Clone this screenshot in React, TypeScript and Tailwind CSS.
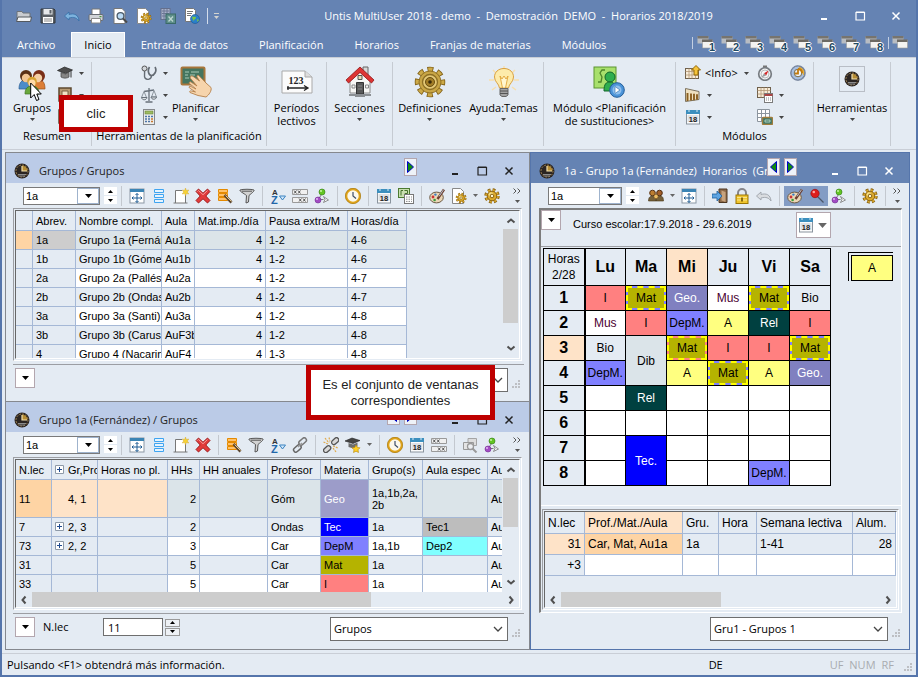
import React, { useState } from 'react';
import clsx from 'clsx';

/* ---------- Icons ---------- */

const gear = (fill: string, stroke: string) => (
  <>
    <circle cx="8" cy="8" r="6" fill="none" stroke={stroke} strokeWidth="3.4" strokeDasharray="2.6 2.1" />
    <circle cx="8" cy="8" r="5.6" fill="none" stroke={fill} strokeWidth="2.4" strokeDasharray="2 2.4" />
    <circle cx="8" cy="8" r="4.8" fill={fill} stroke={stroke} />
    <circle cx="7" cy="6.6" r="2.4" fill="#f5dd84" />
    <circle cx="8" cy="8" r="1.8" fill="#fff6cf" stroke={stroke} />
  </>
);

const palette = (
  <>
    <ellipse cx="7.5" cy="9.5" rx="6.8" ry="5.4" fill="#ead6b6" stroke="#6b5a45" />
    <circle cx="4" cy="9" r="1.4" fill="#c33" />
    <circle cx="6.4" cy="6.6" r="1.2" fill="#3b7fc4" />
    <circle cx="5.6" cy="12" r="1.3" fill="#3a9a3a" />
    <path d="M15 1.5 8.5 11" stroke="#6e3d2b" strokeWidth="2.4" />
    <path d="M14.6 1.6 10 8.4" stroke="#b4c4d6" strokeWidth="1" />
  </>
);

const calendar = (
  <>
    <rect x="1.5" y="1.5" width="13" height="13.5" fill="#fbfbfb" stroke="#8a949e" />
    <rect x="1" y="1" width="14" height="4" fill="#3c8fbe" />
    <path d="M4 0v3M12 0v3" stroke="#d7eaf5" />
    <rect x="2.5" y="6" width="11" height="7" fill="#dde1e5" />
    <text x="8" y="12.6" textAnchor="middle" fontSize="7.5" fontWeight="bold" fontFamily="Liberation Sans, sans-serif" fill="#222">18</text>
  </>
);

const molecule = (
  <>
    <path d="m4.500 11 4-6M4.500 11.500h5" stroke="#777" fill="none" />
    <circle cx="8" cy="4" r="3" fill="#62c522" stroke="#2f7a10" strokeWidth=".6" />
    <circle cx="7" cy="3" r="1" fill="#c9f2a5" />
    <circle cx="4" cy="12" r="3" fill="#a24cc4" stroke="#6f2a8f" strokeWidth=".6" />
    <circle cx="3" cy="11" r="1" fill="#e2baf2" />
    <path d="m9.500 8.500 5 3.500-5 2.500 1.500-3z" fill="#f4f4f4" stroke="#777" strokeWidth=".8" />
  </>
);

const table = (
  <>
    <rect x=".5" y="3.500" width="13" height="10" fill="#f7ecd9" stroke="#6f604c" />
    <path d="M.5 6.500h13M.5 10h13M4 3.500v10M7 3.500v10M10.500 3.500v10" stroke="#b39775" strokeWidth=".8" />
  </>
);

const ICONS: Record<string, React.ReactNode> = {
  open: (
    <>
      <path d="M1 3.500h5l1 1.500h7v7H1z" fill="#c9ccd0" stroke="#6d7278" />
      <path d="M2 9h13.500l-1 4.500H.5z" fill="#f1f2f3" stroke="#53585e" />
    </>
  ),
  save: (
    <>
      <path d="M1 1h13l1 1v13H1z" fill="#5b6066" stroke="#33373b" />
      <rect x="3.500" y="1" width="9" height="5.500" fill="#e6e8ea" />
      <rect x="9.500" y="2" width="2" height="3.500" fill="#5b6066" />
      <rect x="3" y="9" width="10" height="6" fill="#fff" />
      <path d="M4 11h8M4 13h8" stroke="#888" />
    </>
  ),
  undo: <path d="M.5 8 5 4v2.500c5-1.500 9.500 0 10 6.500-2-3-5-4.500-10-3V12z" fill="#7db2dd" stroke="#2f6aa3" strokeWidth=".7" />,
  undoGray: <path d="M.5 8 5 4v2.500c5-1.500 9.500 0 10 6.500-2-3-5-4.500-10-3V12z" fill="#d9dce0" stroke="#9da3aa" strokeWidth=".9" />,
  print: (
    <>
      <path d="M4 1h8v6H4z" fill="#fff" stroke="#777" />
      <rect x="1" y="6.500" width="14" height="6" rx="1" fill="#d0d3d7" stroke="#666b72" />
      <path d="M3.500 10.500h9v4.500h-9z" fill="#fff" stroke="#888" />
      <rect x="11.500" y="8" width="2" height="1.200" fill="#4a9a3a" />
    </>
  ),
  preview: (
    <>
      <path d="M2 .5h8l3 3v12H2z" fill="#fff" stroke="#777" />
      <circle cx="8.500" cy="8" r="3.400" fill="#bcdcf5" stroke="#4b5a68" strokeWidth="1.300" />
      <path d="m11 10.500 4 4" stroke="#4b4b4b" strokeWidth="2" />
    </>
  ),
  pageGear: (
    <>
      <path d="M1.500.5h8l3 3v12h-11z" fill="#fff" stroke="#888" />
      <g transform="translate(4.500 4.500) scale(.7)">{gear('#e2ad2a', '#8c6410')}</g>
    </>
  ),
  excel: (
    <>
      <rect x="1" y=".5" width="9" height="11" fill="#a9b3cb" stroke="#646f8c" />
      <path d="M2 3h7M2 5.500h7M2 8h7M4 1v10M7 1v10" stroke="#6c7794" />
      <rect x="6" y="6" width="9.500" height="9.500" fill="#5e8f8a" stroke="#3a6a67" />
      <path d="m8.500 8.500 4.500 5M13 8.500l-4.500 5" stroke="#bcd6d0" strokeWidth="1.300" />
    </>
  ),
  pageGlobe: (
    <>
      <path d="M1.500.5h8l2 2v11h-10z" fill="#fff" stroke="#777" />
      <path d="M3 3.500h6M3 5.500h5M3 7.500h4" stroke="#777" />
      <circle cx="11" cy="11" r="4.500" fill="#2a7fca" stroke="#1b5590" strokeWidth=".6" />
      <path d="M8 8.500c2 .5 4-.5 4 1s-2 1.500-2 3-2-2.500-2-4zM13 11l2 1-1.500 2z" fill="#7bc745" />
    </>
  ),
  windows: (
    <>
      <path d="M.5 1.500h11v7H.5z" fill="#b8bcc2" />
      <path d="M.5 1h11v2.500H.5z" fill="#77746e" />
      <path d="M5.500 5h10v8h-10z" fill="#f3f3f1" stroke="#9c9b97" strokeWidth=".6" />
      <path d="M5 4.500h10.500V7H5z" fill="#6c6963" />
    </>
  ),
  fit: (
    <>
      <rect x="1" y="1" width="14" height="14" fill="#fff" stroke="#8b98a5" />
      <path d="M1 2.500h14" stroke="#3b84b4" strokeWidth="3" />
      <path d="M8 5.500v9M3 10h10M6.500 7 8 5.500 9.500 7M6.500 13 8 14.500 9.500 13M4.500 8.500 3 10l1.500 1.500M11.500 8.500 13 10l-1.500 1.500" stroke="#1e5c94" fill="none" />
    </>
  ),
  rows: <path d="M3.500 1.500h9v3h-9zM3.500 6.500h9v3h-9zM3.500 11.500h9v3h-9z" fill="#e6f4ff" stroke="#3fa4f0" />,
  newPage: (
    <>
      <path d="M2.500 2.500h7l3 3v9.500h-10z" fill="#fff" />
      <path d="M2.500 15V2.500H9M12.500 7v8M.5 15h14" stroke="#777" fill="none" />
      <path d="m12.500 0 .8 2.400L15.800 2l-1.500 2 1.500 2-2.500-.4-.8 2.400-.8-2.400-2.500.4 1.500-2-1.500-2 2.500.4z" fill="#f7d233" stroke="#d0a020" strokeWidth=".4" />
    </>
  ),
  remove: (
    <>
      <path d="m1 3.500 2.500-2.500L8 5.200 12.500 1 15 3.500 10.800 8l4.200 4.500-2.500 2.500L8 10.800 3.500 15 1 12.500 5.200 8z" fill="#e23b3b" stroke="#971212" strokeWidth=".9" />
      <path d="m2.500 3.500 1-1L8 6.700l4.500-4.200" stroke="#f79a9a" fill="none" />
    </>
  ),
  edit: (
    <>
      <path d="M1.500 1.500h9v3h-9zM1.500 5.500h9v3h-9zM1.500 9.500h9v3h-9z" fill="#ffc168" stroke="#e58a00" />
      <path d="m7.500 7 7 7.500" stroke="#5b4630" strokeWidth="2.600" />
      <path d="m8.500 7.500 6 6" stroke="#e8c98a" strokeWidth="1" />
    </>
  ),
  filter: <path d="M1 2c3-1 11-1 14 0 .6 1-1.500 2.500-5 5.500L9.500 14 7 15l.5-7.500C4.500 5 .5 3.500 1 2zM3 3.200h10" fill="#d2d2d2" stroke="#555" />,
  sort: (
    <>
      <text x="2" y="7" fontSize="8" fontWeight="bold" fontFamily="Liberation Sans, sans-serif" fill="#333">A</text>
      <text x="1" y="15.500" fontSize="11" fontWeight="bold" fontFamily="Liberation Sans, sans-serif" fill="#2166a8">Z</text>
      <path d="M9.500 8h6l-3 4z" fill="#cfe6fa" stroke="#3b82c0" />
    </>
  ),
  fields: (
    <>
      <path d="M.5 1.500h15v5H.5zM.5 9.500h15v5H.5z" fill="#f0f0f0" stroke="#9a9a9a" />
      <path d="m2 2.500 2.500 3m0-3-2.500 3m4-3 2.500 3m0-3-2.500 3M7 10.500l2.500 3m0-3-2.500 3m4-3 2.500 3m0-3-2.500 3" stroke="#333" strokeWidth=".8" />
    </>
  ),
  molecule,
  clock: (
    <>
      <circle cx="8" cy="8" r="6.800" fill="#fbf8ec" stroke="#e0a51c" strokeWidth="2.200" />
      <circle cx="8" cy="8" r="7.700" fill="none" stroke="#8f6508" strokeWidth=".5" />
      <path d="M8 4v4l3 2.500" stroke="#3c4d69" strokeWidth="1.200" fill="none" />
    </>
  ),
  calendar,
  copyTable: (
    <>
      <rect x=".5" y=".5" width="11" height="9" fill="#c9dfb0" stroke="#4c7a31" />
      <path d="M5 2.500H3v5M6.500 2.500h3v3H7v2" stroke="#43702a" fill="none" />
      <rect x="6.500" y="6.500" width="9" height="9" fill="#fff" stroke="#777" />
      <path d="M8 9h6M8 11.200h6M8 13.400h6" stroke="#888" strokeDasharray="1.500 1" />
    </>
  ),
  palette,
  gear: gear('#dba92c', '#8a6312'),
  chain: (
    <>
      <rect x="6.500" y="2" width="8.500" height="4.500" rx="2.200" transform="rotate(-42 11 4.500)" fill="none" stroke="#777" strokeWidth="1.500" />
      <rect x="1" y="9.500" width="8.500" height="4.500" rx="2.200" transform="rotate(-42 5 11.500)" fill="none" stroke="#666" strokeWidth="1.500" />
      <path d="m6 10 4-4" stroke="#999" strokeWidth="1.500" />
    </>
  ),
  unlink: (
    <>
      <rect x="8" y="2" width="8" height="4.500" rx="2.200" transform="rotate(-42 12 4)" fill="#d9d9d9" stroke="#555" strokeWidth="1.300" />
      <rect x="0" y="10" width="8" height="4.500" rx="2.200" transform="rotate(-42 4 12)" fill="#d9d9d9" stroke="#555" strokeWidth="1.300" />
      <path d="m2 1 4 5M6 .5l1 4M.5 5 5 7M10 9l5 2M10 11l3 4" stroke="#e0a94a" strokeWidth="1.200" strokeDasharray="2 1" />
    </>
  ),
  capStar: (
    <>
      <path d="m0 4 7-3 8 2.500-7 3z" fill="#444" stroke="#222" strokeWidth=".6" />
      <path d="M3.500 6v4l5 1.500 4-2V5.500L8 7.500z" fill="#6c6c6c" />
      <path d="m11 8 1.300 2.500 2.700.3-2 2 .5 2.700-2.500-1.300L8.500 15.500l.5-2.700-2-2 2.700-.3z" fill="#ffcf24" stroke="#b78608" strokeWidth=".6" />
    </>
  ),
  cap: (
    <>
      <path d="m.5 5.500 7-3.500 8 3-7 3.500z" fill="#4d4d4d" stroke="#222" strokeWidth=".7" />
      <path d="M4 7.500v4.500c2 1.500 6 1.500 8 0V7l-3.500 2z" fill="#858585" stroke="#444" strokeWidth=".7" />
      <path d="M14 5.500v7" stroke="#333" />
    </>
  ),
  tablesGray: (
    <>
      <path d="M6 1.500h8.500v7H6z" fill="#ddd" stroke="#a5a5a5" />
      <path d="M1.500 5.500h10v7h-10z" fill="#e4e4e4" stroke="#999" />
      <circle cx="8.500" cy="9.500" r="3" fill="#eceef1" stroke="#999" strokeWidth="1.300" />
      <path d="m10.500 11.500 4 4" stroke="#999" strokeWidth="2" />
    </>
  ),
  people: (
    <>
      <circle cx="4.500" cy="5" r="2.800" fill="#bb7d31" stroke="#5b3413" />
      <circle cx="11.500" cy="5" r="2.800" fill="#a35f2a" stroke="#4f2c10" />
      <path d="M.5 13c0-4 2-5 4-5s3.500 1 3.500 5zM8 13c0-4 2-5 4-5s3.500 1 3.500 5z" fill="#75603a" stroke="#463619" strokeWidth=".6" />
      <circle cx="8" cy="8.500" r="2.200" fill="#edbd63" stroke="#6b4310" strokeWidth=".6" />
    </>
  ),
  exit: (
    <>
      <path d="M7 1h8v13.500H7z" fill="#8c6a4a" stroke="#4d3722" />
      <path d="m9.500 2.500 4 1.500v10l-4-1.500z" fill="#c7a37e" />
      <path d="M0 6h5V3l5 5-5 5v-3H0z" fill="#5da4e2" stroke="#1f5f9c" strokeWidth=".8" />
    </>
  ),
  lock: (
    <>
      <path d="M4 8V5a4 4 0 0 1 8 0v3" fill="none" stroke="#85858a" strokeWidth="2" />
      <rect x="2" y="7" width="12" height="8.500" fill="#f0c52d" stroke="#9b7605" />
      <path d="M3 9.500h10M3 12h10" stroke="#fae58b" />
      <rect x="7.200" y="9.500" width="1.600" height="4" fill="#6e5200" />
    </>
  ),
  pin: (
    <>
      <path d="m8 8 6.500 6.500" stroke="#4b5568" strokeWidth="1.300" />
      <circle cx="6" cy="5.500" r="4.200" fill="#dd1d1d" stroke="#8b0b0b" strokeWidth=".6" />
      <circle cx="4.800" cy="4" r="1.300" fill="#ffa4a4" />
    </>
  ),
  steth: (
    <>
      <path d="M8.500 2C6 6 8 10.500 10.500 10.500S16.500 6 14 2" fill="none" stroke="#646b73" strokeWidth="1.700" />
      <path d="M10.500 10.500c0 4-4.500 5-6.500 2.500C2.800 11 4 9 3.500 6" fill="none" stroke="#646b73" strokeWidth="1.400" />
      <circle cx="3.500" cy="3.500" r="2.500" fill="#d2d6da" stroke="#555" />
    </>
  ),
  scales: (
    <>
      <path d="M8 1v13M3 4.500 13 3M4.500 15h7" stroke="#67707a" strokeWidth="1.300" />
      <path d="m3 4.500-2.500 6h5zM13 3.500l-2.500 6.500h5z" fill="none" stroke="#8d969e" />
      <path d="M.5 10.500h5.500c-.5 3-5 3-5.500 0zM10 10h5.500c-.5 3-5 3-5.500 0z" fill="#dce1e4" stroke="#67707a" />
    </>
  ),
  calculator: (
    <>
      <rect x="2.500" y=".5" width="11" height="15" fill="#eceeee" stroke="#85888c" />
      <rect x="4" y="2" width="8" height="3" fill="#9dbb62" stroke="#6a853a" strokeWidth=".6" />
      <path d="M4 7.500h2M7 7.500h2M4 10h2M7 10h2M4 12.500h2M7 12.500h2M10 7.500h2" stroke="#4d74a8" strokeWidth="1.500" />
      <path d="M10 10h2M10 12.500h2" stroke="#c9782f" strokeWidth="1.500" />
    </>
  ),
  book: (
    <>
      <path d="M2 1h12v13H2z" fill="#b79a73" stroke="#5d4a30" strokeWidth="1.500" />
      <path d="M5 4h6v5H5z" fill="#f2e2c4" stroke="#7b6342" />
    </>
  ),
  room: (
    <>
      <path d="m.5 1.500 13.500 3v8L.5 14.500z" fill="#efe0bf" stroke="#7d735f" />
      <path d="M2.500 6v8M6 6.500v7M9 6.800v6.500M12 7.200v5.500" stroke="#8a5f20" strokeWidth="1.900" />
    </>
  ),
  tableUp: (
    <>
      {table}
      <path d="m11 .5 4.500 4.500H13v5H9V5H6.500z" fill="#f5c33a" stroke="#916606" />
    </>
  ),
  tableCal: (
    <>
      <g transform="translate(0 -3)">{table}</g>
      <rect x="7.500" y="6.500" width="8" height="9" fill="#fff" stroke="#7b7b7b" />
      <path d="M7.500 8h8" stroke="#a44" strokeWidth="2" />
      <path d="M9 11h5M9 13h5" stroke="#888" strokeDasharray="1 1" />
    </>
  ),
  tableBoard: (
    <>
      <path d="M.5.5h12v12H.5zM.5 4.500h12M.5 8.500h12M4.500.5v12M8.500.5v12" fill="#fff" stroke="#8c959e" />
      <rect x="5.500" y="8.500" width="10" height="7" rx="1" fill="#3e7867" stroke="#a07d3c" strokeWidth="1.400" />
      <path d="M8 11h5v2H8z" fill="none" stroke="#d8ecd8" strokeWidth=".7" />
    </>
  ),
  compass: (
    <>
      <path d="M6 .5h4v2H6z" fill="#777" />
      <circle cx="8" cy="9" r="6.300" fill="#f4f5f6" stroke="#777c82" strokeWidth="1.700" />
      <circle cx="8" cy="9" r="4" fill="none" stroke="#bbb" />
      <path d="m11.500 5.500-2.300 5L7 8.200z" fill="#d62626" />
      <path d="M4.500 12.500 7 8.200l2.200 2.300z" fill="#9b9b9b" />
    </>
  ),
  timer: (
    <>
      <circle cx="8" cy="8" r="7" fill="#e9b23a" stroke="#76849d" strokeWidth="1.600" />
      <path d="M8 1a7 7 0 0 0 0 14 7 7 0 0 0 6-4" fill="#a7bfe2" stroke="#76849d" />
      <circle cx="8" cy="8" r="3.800" fill="#eef3fb" stroke="#7a6a45" />
      <path d="M8 4v4.500H5M8 4c3 0 4 2 4 4" stroke="#c27a0c" strokeWidth="1.800" fill="none" />
    </>
  ),
  app: (
    <>
      <circle cx="8" cy="8" r="7.500" fill="#2b2522" />
      <circle cx="8" cy="8" r="6" fill="none" stroke="#ab8c57" strokeWidth="1" strokeDasharray="1.600 1.500" />
      <path d="M8 8V2.500A5.500 5.500 0 0 1 13.500 8z" fill="#b58c35" />
      <path d="M8 3v5h5" stroke="#f3e2ae" strokeWidth="1.200" fill="none" />
      <path d="M4 11.500h8M5 13h6" stroke="#8c8c8c" />
    </>
  ),
  minimize: <path d="M5 11h6" stroke="currentColor" strokeWidth="2" />,
  maximize: <path d="M4 4.500h8.500v7.500H4zM4 4h8.500" stroke="currentColor" strokeWidth="1.200" fill="none" />,
  close: <path d="m4.500 4.500 7 7m0-7-7 7" stroke="currentColor" strokeWidth="1.500" />,
  chevDown: <path d="m4 6 4 4 4-4" stroke="currentColor" strokeWidth="1.300" fill="none" />,
  scrollUp: <path d="m4.500 9.500 3.500-3 3.500 3" stroke="#505050" strokeWidth="2" fill="none" />,
  scrollDown: <path d="m4.500 6.500 3.500 3 3.500-3" stroke="#505050" strokeWidth="2" fill="none" />,
  scrollLeft: <path d="m9.500 4.500-3 3.500 3 3.500" stroke="#505050" strokeWidth="2" fill="none" />,
  scrollRight: <path d="m6.500 4.500 3 3.500-3 3.500" stroke="#505050" strokeWidth="2" fill="none" />,
  grip: <path d="M10 4h2v2h-2zM7 7h2v2H7zM10 7h2v2h-2zM4 10h2v2H4zM7 10h2v2H7zM10 10h2v2h-2z" fill="#bdbfc3" />,
};

function Icon({ name, className = 'size-4' }: { name: string; className?: string }) {
  return (
    <svg viewBox="0 0 16 16" className={clsx('shrink-0', className)} aria-hidden="true">
      {ICONS[name]}
    </svg>
  );
}

const GroupsIcon = () => (
  <svg viewBox="0 0 32 32" className="size-8" aria-hidden="true">
    <path d="M3 23c0-7 3-9 7-9s5 3 5 9z" fill="#4d8cc9" stroke="#2d5f93" strokeWidth=".7" />
    <path d="M17 23c0-7 2-9 6-9s6 3 6 9z" fill="#dc7e37" stroke="#99501b" strokeWidth=".7" />
    <circle cx="10" cy="10" r="6" fill="#5a3115" />
    <circle cx="10" cy="12" r="4.200" fill="#f2c592" />
    <circle cx="23" cy="10" r="6" fill="#7a2f17" />
    <circle cx="22" cy="12" r="4.200" fill="#f5cfa3" />
    <path d="M9 28c0-6 3-8 7-8s7 2 7 8z" fill="#68a83c" stroke="#3d7220" strokeWidth=".7" />
    <circle cx="16" cy="15.500" r="4.800" fill="#d6a332" />
    <circle cx="16" cy="17" r="3.500" fill="#ffd9a6" />
  </svg>
);

const BoardHandIcon = () => (
  <svg viewBox="0 0 32 32" className="size-8" aria-hidden="true">
    <rect x="1.500" y="1.500" width="23" height="17" rx="1" fill="#44755f" stroke="#a8763b" strokeWidth="2" />
    <path d="M5 6h4m2 0h8M5 9h3m2 0h5M5 12h4" stroke="#a7cbb8" />
    <path d="M10.500 10.500c1-1 2-.5 3 .2l6 4.300-2.500-4c-.5-1.500 1-2.200 2-1.200L26 17l5 4.500c1 3-2 7.500-5 9.500l-8-1.500-8-3c-1-1 0-2 1.500-1.500l4 1-6-4c-1-1.200 0-2.200 1.500-1.500l5 2.500-6.500-5.500c-.8-1.300.5-2.200 1.800-1.300l5.700 3.800-6-7c-.8-.8-1-1.800-.5-2.500z" fill="#f6d4ac" stroke="#b5804a" strokeWidth=".9" />
  </svg>
);

const PeriodsIcon = () => (
  <svg viewBox="0 0 32 32" className="size-8" aria-hidden="true">
    <path d="M1 5h23l7 6v16H1z" fill="#fbfbfb" stroke="#a9a9a9" />
    <path d="M24 5v6h7" fill="#ddd" stroke="#a9a9a9" />
    <text x="15" y="18" textAnchor="middle" fontSize="10" fontWeight="bold" fontFamily="Liberation Serif, serif" fill="#222">123</text>
    <path d="M6 22h20M7 20v4M23 19.500l4 2.500-4 2.500" stroke="#222" strokeWidth="1.300" fill="none" />
  </svg>
);

const HouseIcon = () => (
  <svg viewBox="0 0 32 32" className="size-8" aria-hidden="true">
    <path d="M19 1h5v9h-5z" fill="#d7d7d7" stroke="#666" />
    <path d="M6 15 16 6l10 9v12H6z" fill="#f7f7f5" stroke="#8a8a8a" />
    <path d="m16 1 14 13-2.500 3L16 6.500 4.500 17 2 14z" fill="#dd3434" stroke="#8f1414" strokeWidth=".8" />
    <path d="M14 9.500h4v4h-4z" fill="#e8ddb0" stroke="#555" />
    <path d="M12.500 16.500h7V28h-7z" fill="#595959" stroke="#333" />
    <path d="M14 20h4m-4 3h4M8 19h3v3H8zM21.500 19h3v3h-3z" stroke="#888" fill="none" />
    <path d="M5 28h8v2H5zM19 28h8v2h-8zM11 28h10v3H11z" fill="#8b8f93" />
  </svg>
);

const BigGearIcon = () => (
  <svg viewBox="0 0 32 32" className="size-8" aria-hidden="true">
    <circle cx="16" cy="16" r="12" fill="none" stroke="#83631a" strokeWidth="6.500" strokeDasharray="5.600 3.825" strokeDashoffset="2.800" />
    <circle cx="16" cy="16" r="12" fill="none" stroke="#cdaa48" strokeWidth="4.800" strokeDasharray="4 5.425" strokeDashoffset="2" />
    <circle cx="16" cy="16" r="11" fill="#c8a545" stroke="#83631a" strokeWidth=".8" />
    <circle cx="16" cy="16" r="7.500" fill="#e4c977" stroke="#8d6f24" strokeWidth="1.300" />
    <circle cx="16" cy="16" r="4.500" fill="#a37e27" stroke="#6a4e10" />
    <circle cx="16" cy="16" r="1.800" fill="#3b2c0a" />
  </svg>
);

const BulbIcon = () => (
  <svg viewBox="0 0 32 32" className="size-8" aria-hidden="true">
    <path d="M16 0v4M5 4l4 4M27 4l-4 4M1 14h5M26 14h5M4 24l4-3M28 24l-4-3" stroke="#f7dfae" strokeWidth="1.500" />
    <path d="M16 2.500c-6 0-9.500 4-9.500 8.500 0 5 4.500 6.500 5 11h9c.5-4.500 5-6 5-11 0-4.500-3.500-8.500-9.500-8.500z" fill="#fdebaa" stroke="#d9a03f" />
    <path d="m12 10 2 3 2-3 2 3 2-3-2.500 12h-3z" fill="#fff6cf" stroke="#dd9c2a" strokeWidth=".8" />
    <path d="M12 22.500h8V29l-2 1.500h-4L12 29z" fill="#a3a3a3" stroke="#666" />
    <path d="M12 25h8m-8 2.500h8" stroke="#555" />
  </svg>
);

const SubstitutionIcon = () => (
  <svg viewBox="0 0 32 32" className="size-8" aria-hidden="true">
    <rect x="1" y="1" width="22" height="21" fill="#a8e06c" stroke="#5a9430" />
    <path d="M12 4H9l-2 3 2 4-1 5H5" stroke="#4d852a" fill="none" strokeWidth="1.300" />
    <circle cx="17" cy="11" r="5" fill="#2eae4e" stroke="#12672a" />
    <path d="M11 25c0-7 2-9 6-9s6 3 6 9z" fill="#2eae4e" stroke="#12672a" />
    <circle cx="24" cy="24" r="7.300" fill="#4c94d8" stroke="#235d99" />
    <circle cx="24" cy="24" r="4.500" fill="#8fc0ee" />
    <path d="m22 20.500 5 3.500-5 3.500z" fill="#fff" stroke="#2c6ba9" strokeWidth=".6" />
  </svg>
);

const Caret = ({ className = 'h-1 w-[7px]' }: { className?: string }) => (
  <svg viewBox="0 0 7 4" className={clsx('shrink-0', className)} aria-hidden="true">
    <path d="M0 0h7L3.500 4z" fill="currentColor" />
  </svg>
);

/* ---------- Title bar and tabs ---------- */

const QUICK_ICONS = ['open', 'save', 'undo', 'print', 'preview', 'pageGear', 'excel', 'pageGlobe'];
const TABS = ['Archivo', 'Inicio', 'Entrada de datos', 'Planificación', 'Horarios', 'Franjas de materias', 'Módulos'];

function TitleBar() {
  return (
    <div className="grid h-8 grid-cols-[322fr_389fr_203fr] items-center text-white">
      <div className="flex h-7 items-center pl-[10px]">
        {QUICK_ICONS.map((name) => (
          <button key={name} aria-label={name} className="flex w-6 justify-center">
            <Icon name={name} />
          </button>
        ))}
        <span className="ml-[3px] h-4 w-px bg-[#d3dceb]" />
        <button aria-label="Personalizar" className="ml-1.5 flex flex-col items-center gap-0.5 text-[#d3d3cf]">
          <span className="h-px w-[5px] bg-current" />
          <Caret className="h-[3px] w-[5px]" />
        </button>
      </div>
      <h1 className="text-center whitespace-pre">Untis MultiUser 2018 - demo  -  Demostración  DEMO  -  Horarios 2018/2019</h1>
      <div className="flex justify-end gap-5 pr-3">
        <button aria-label="Minimizar"><Icon name="minimize" /></button>
        <button aria-label="Maximizar"><Icon name="maximize" /></button>
        <button aria-label="Cerrar"><Icon name="close" /></button>
      </div>
    </div>
  );
}

function TabBar() {
  const [active, setActive] = useState('Inicio');
  return (
    <div className="flex h-[25px] items-stretch justify-between">
      <nav className="flex gap-px">
        {TABS.map((tab) => (
          <button
            key={tab}
            onClick={() => setActive(tab)}
            className={clsx(
              tab === active ? 'border border-b-0 border-white bg-[#e4ebf3] px-3 text-black' : 'px-[15px] text-white'
            )}
          >
            {tab}
          </button>
        ))}
      </nav>
      <div className="flex items-center pr-2 pb-1">
        <span className="h-3 w-px bg-[#c3cfe2]" />
        {[1, 2, 3, 4, 5, 6, 7, 8].map((n) => (
          <button key={n} aria-label={`Ventana ${n}`} className="relative flex w-6 justify-center">
            <Icon name="windows" />
            <span className="absolute top-1.5 right-0.5 font-['Liberation_Sans',sans-serif] text-[11px] leading-3 font-bold text-[#1f4a63] [text-shadow:1px_0_#fff,-1px_0_#fff,0_1px_#fff,0_-1px_#fff]">
              {n}
            </span>
          </button>
        ))}
        <span className="mx-[3px] h-3 w-px bg-[#c3cfe2]" />
        <button aria-label="Ventanas"><Icon name="windows" /></button>
      </div>
    </div>
  );
}

/* ---------- Ribbon ---------- */

function RibbonGroup({ label, className, children }: { label?: string; className: string; children: React.ReactNode }) {
  return (
    <section className={clsx('flex shrink-0 flex-col border-r border-[#c6cbd2]', className)}>
      <div className="flex flex-1 justify-center">{children}</div>
      {label && <div className="h-[19px] text-center whitespace-nowrap">{label}</div>}
    </section>
  );
}

function BigButton({ icon, label, caret = true, className }: { icon: React.ReactNode; label: React.ReactNode; caret?: boolean; className?: string }) {
  return (
    <button className={clsx('flex flex-col items-center pt-1 leading-[13px]', className)}>
      <span className="flex h-[35px] items-start">{icon}</span>
      <span className="whitespace-nowrap">{label}</span>
      {caret && <Caret className="mt-1 h-[3px] w-[5px] text-[#444]" />}
    </button>
  );
}

function SmallButton({ icon, label, caret = true }: { icon: string; label?: string; caret?: boolean }) {
  return (
    <button className="flex h-[22px] items-center gap-1" aria-label={label ?? icon}>
      <Icon name={icon} />
      {label && <span>{label}</span>}
      {caret && <Caret className="ml-0.5 h-[3px] w-[5px] text-[#444]" />}
    </button>
  );
}

function Ribbon() {
  return (
    <div className="flex h-[93px] border-y border-[#c9ced6] bg-[#e4ebf3] pt-1 pb-[3px] pl-px">
      <RibbonGroup className="w-[89px]" label="Resumen">
        <div className="flex w-full gap-1 pl-2">
          <BigButton icon={<GroupsIcon />} label="Grupos" className="w-[42px]" />
          <div>
            <SmallButton icon="cap" />
            <SmallButton icon="book" />
            <SmallButton icon="book" />
          </div>
        </div>
      </RibbonGroup>
      <RibbonGroup className="w-[175px]" label="Herramientas de la planificación">
        <div className="flex w-full gap-1 pl-[49px]">
          <div>
            <SmallButton icon="steth" />
            <SmallButton icon="scales" />
            <SmallButton icon="calculator" />
          </div>
          <BigButton icon={<BoardHandIcon />} label="Planificar" />
        </div>
      </RibbonGroup>
      <RibbonGroup className="w-[60px]">
        <BigButton icon={<PeriodsIcon />} label={<>Períodos<br />lectivos</>} caret={false} />
      </RibbonGroup>
      <RibbonGroup className="w-[66px]">
        <BigButton icon={<HouseIcon />} label="Secciones" />
      </RibbonGroup>
      <RibbonGroup className="w-[151px]">
        <div className="flex gap-2">
          <BigButton icon={<BigGearIcon />} label="Definiciones" />
          <BigButton icon={<BulbIcon />} label="Ayuda:Temas" />
        </div>
      </RibbonGroup>
      <RibbonGroup className="w-[132px]">
        <BigButton icon={<SubstitutionIcon />} label={<>Módulo &lt;Planificación<br />de sustituciones&gt;</>} caret={false} />
      </RibbonGroup>
      <RibbonGroup className="w-[138px]" label="Módulos">
        <div className="grid w-full grid-cols-[72px_33px_24px] content-start pl-[9px]">
          <SmallButton icon="tableUp" label="<Info>" />
          <SmallButton icon="compass" caret={false} />
          <SmallButton icon="timer" caret={false} />
          <SmallButton icon="room" />
          <SmallButton icon="tableCal" />
          <span />
          <SmallButton icon="calendar" />
          <SmallButton icon="tableBoard" />
        </div>
      </RibbonGroup>
      <RibbonGroup className="w-[77px]">
        <BigButton
          icon={<span className="flex size-[26px] items-center justify-center border border-[#b9bec6]"><Icon name="app" /></span>}
          label="Herramientas"
        />
      </RibbonGroup>
    </div>
  );
}

/* ---------- Shared window parts ---------- */

function NavArrow({ dir }: { dir: 'left' | 'right' }) {
  return (
    <button aria-label={dir === 'left' ? 'Anterior' : 'Siguiente'} className="flex h-[18px] w-[13px] items-center justify-center border border-[#b3a6ae] bg-[#eef2f8]">
      <svg viewBox="0 0 7 12" className="h-3 w-[7px]" aria-hidden="true">
        <path d={dir === 'left' ? 'M6.500.5v11L.5 6z' : 'M.5.5v11L6.500 6z'} fill="#108a10" stroke="#0000c8" />
      </svg>
    </button>
  );
}

function WindowFrame({ title, active, arrows, toolbar, footer, children }: {
  title: string;
  active?: boolean;
  arrows: React.ReactNode;
  toolbar: React.ReactNode;
  footer: React.ReactNode;
  children: React.ReactNode;
}) {
  return (
    <section className={clsx('flex min-h-0 min-w-0 flex-col border-t border-l bg-[#e4ebf3]', active ? 'border-r border-b border-[#5575ab]' : 'border-r border-[#85888e]')}>
      <header className={clsx('flex h-[30px] shrink-0 items-center pt-[5px] pr-3 pl-2', active ? 'bg-[#6583b3] text-white' : 'bg-[#bbcbe7] text-[#222]')}>
        <Icon name="app" />
        <h2 className="ml-[9px] min-w-0 flex-1 overflow-hidden whitespace-pre">{title}</h2>
        <div className="mr-[30px] flex gap-1 self-start">{arrows}</div>
        <div className="flex gap-[11px]">
          <button aria-label="Minimizar"><Icon name="minimize" /></button>
          <button aria-label="Maximizar"><Icon name="maximize" /></button>
          <button aria-label="Cerrar"><Icon name="close" /></button>
        </div>
      </header>
      <div className="flex h-[25px] shrink-0 items-center pl-[17px]">
        <div className="flex h-[18px] w-[77px] border border-[#7a7a7a] bg-white font-['Liberation_Sans',sans-serif]">
          <label className="relative flex-1">
            <span className="sr-only">Grupo</span>
            <select className="h-full w-full appearance-none bg-transparent pl-0.5 text-[11px] leading-none outline-none">
              <option>1a</option>
              <option>1b</option>
            </select>
            <span className="pointer-events-none absolute inset-y-0 right-0 flex w-[22px] items-center justify-center border border-[#9fb3cd]">
              <Caret />
            </span>
          </label>
        </div>
        <Spinner />
        {toolbar}
        <button aria-label="Más" className="mr-1 ml-auto flex w-4 flex-col items-center gap-1.5 text-[#555]">
          <svg viewBox="0 0 8 6" className="h-1.5 w-2" aria-hidden="true">
            <path d="m.5.5 2.500 2.500L.5 5.500M4.500.5 7 3 4.500 5.500" fill="none" stroke="currentColor" />
          </svg>
          <Caret className="h-[3px] w-[5px]" />
        </button>
      </div>
      {children}
      {footer}
    </section>
  );
}

function Spinner({ boxed }: { boxed?: boolean }) {
  const half = clsx('flex h-2 items-center justify-center', boxed ? 'border border-[#9a9a9a] bg-[#eef1f5]' : 'bg-white');
  return (
    <span className={clsx('flex flex-col gap-px', boxed ? 'ml-0.5 w-[15px]' : 'ml-1 w-[13px]')}>
      <button aria-label="Subir" className={half}><Caret className="h-[3px] w-[5px] rotate-180" /></button>
      <button aria-label="Bajar" className={half}><Caret className="h-[3px] w-[5px]" /></button>
    </span>
  );
}

// "|" stands for a separator and "v" for a drop-down arrow
function Tools({ items, pressed = [] }: { items: string[]; pressed?: string[] }) {
  return (
    <>
      {items.map((item, i) => {
        if (item === '|') return <span key={i} className="mx-1 h-5 w-px bg-[#c3c8cf]" />;
        if (item === 'v') return <button key={i} aria-label="Opciones" className="flex w-[11px] justify-center text-[#666]"><Caret className="h-[3px] w-[5px]" /></button>;
        return (
          <button
            key={i}
            aria-label={item}
            className={clsx('flex h-5 w-[22px] shrink-0 items-center justify-center', i === 0 && 'ml-1.5', pressed.includes(item) && 'bg-[#839cc4]')}
          >
            <Icon name={item} />
          </button>
        );
      })}
    </>
  );
}

function Sunken({ className, children }: { className?: string; children: React.ReactNode }) {
  return (
    <div className={clsx('flex flex-col border border-t-[#9c9ea3] border-r-white border-b-white border-l-[#9c9ea3] p-px', className)}>
      <div className="flex min-h-0 flex-1 flex-col border border-t-[#676767] border-r-white border-b-white border-l-[#676767]">{children}</div>
    </div>
  );
}

function VScroll({ thumb }: { thumb: string }) {
  return (
    <div className="flex w-[17px] shrink-0 flex-col items-center">
      <Icon name="scrollUp" className="mt-0.5 size-4" />
      <div className="min-h-0 w-[15px] flex-1">
        <div className={clsx('w-full bg-[#cdcdcd]', thumb)} />
      </div>
      <Icon name="scrollDown" className="mb-0.5 size-4" />
    </div>
  );
}

function HScroll({ thumb }: { thumb: string }) {
  return (
    <div className="flex h-[15px] shrink-0 items-center">
      <Icon name="scrollLeft" />
      <div className="h-full flex-1">
        <div className={clsx('h-full bg-[#cdcdcd]', thumb)} />
      </div>
      <Icon name="scrollRight" />
    </div>
  );
}

const MenuButton = () => (
  <button aria-label="Menú" className="flex h-5 w-5 shrink-0 items-center justify-center border border-[#b3a6ae] bg-white">
    <Caret />
  </button>
);

function FooterSelect({ label, value }: { label: string; value: string }) {
  return (
    <div className="flex items-end">
      <label className="relative">
        <span className="sr-only">{label}</span>
        <select className="h-6 w-[178px] appearance-none border border-[#6e6e6e] bg-white pl-[3px] outline-none">
          <option>{value}</option>
        </select>
        <Icon name="chevDown" className="pointer-events-none absolute top-1 right-0.5 size-4 text-[#444]" />
      </label>
      <Icon name="grip" />
    </div>
  );
}

const CELL = 'overflow-hidden border-r border-b border-[#a5b8d6] px-[3px] py-0 text-left font-normal whitespace-nowrap';

/* ---------- Groups window ---------- */

const GROUP_COLS = ['w-[17px]', 'w-[43px]', 'w-[86px]', 'w-[33px]', 'w-[71px]', 'w-[82px]', 'w-[59px]'];
const GROUPS = [
  ['1a', 'Grupo 1a (Fernández)', 'Au1a', '4', '1-2', '4-6'],
  ['1b', 'Grupo 1b (Gómez)', 'Au1b', '4', '1-2', '4-6'],
  ['2a', 'Grupo 2a (Pallés)', 'Au2a', '4', '1-2', '4-7'],
  ['2b', 'Grupo 2b (Ondas)', 'Au2b', '4', '1-2', '4-7'],
  ['3a', 'Grupo 3a (Santi)', 'Au3a', '4', '1-2', '4-8'],
  ['3b', 'Grupo 3b (Caruso)', 'AuF3b', '4', '1-2', '4-8'],
  ['4', 'Grupo 4 (Nacarino)', 'AuF4', '4', '1-3', '4-8'],
];

function GroupsWindow() {
  return (
    <WindowFrame
      title="Grupos / Grupos"
      arrows={<NavArrow dir="right" />}
      toolbar={
        <Tools
          items={['|', 'fit', 'rows', 'newPage', 'remove', 'edit', 'filter', '|', 'sort', 'fields', 'molecule', '|', 'clock', '|', 'calendar', 'copyTable', '|', 'palette', 'pageGear', 'v', 'gear']}
        />
      }
      footer={
        <footer className="mt-[3px] mr-[5px] ml-[7px] flex h-[37px] shrink-0 items-start justify-between border-t border-[#9c9ea3] pt-[3px] pl-0.5">
          <MenuButton />
          <FooterSelect label="Vista de grupos" value="Grupos" />
        </footer>
      }
    >
      <Sunken className="mx-[7px] min-h-0 flex-1">
        <div className="flex min-h-0 flex-1">
          <div className="min-w-0 flex-1 overflow-hidden">
            <table className="w-px table-fixed border-separate border-spacing-0 font-['Liberation_Sans',sans-serif] text-[11px] leading-[14px]">
              <colgroup>{GROUP_COLS.map((w, i) => <col key={i} className={w} />)}</colgroup>
              <thead>
                <tr className="h-5">
                  {['', 'Abrev.', 'Nombre compl.', 'Aula', 'Mat.imp./día', 'Pausa extra/M', 'Horas/día'].map((h) => (
                    <th key={h} className={CELL}>{h}</th>
                  ))}
                </tr>
              </thead>
              <tbody>
                {GROUPS.map((row, r) => (
                  <tr key={row[0]} className="h-[19px]">
                    <td className={clsx(CELL, r === 0 && 'bg-[#fed4a4]')} />
                    {row.map((cell, c) => (
                      <td
                        key={c}
                        className={clsx(
                          CELL,
                          c === 3 && 'text-right',
                          r === 0 && (c === 0 ? 'bg-[#cdcdcd]' : 'bg-[#dbe4e9]'),
                          r > 0 && r % 2 === 0 && c > 0 && 'bg-white'
                        )}
                      >
                        {cell}
                      </td>
                    ))}
                  </tr>
                ))}
              </tbody>
            </table>
          </div>
          <VScroll thumb="h-[94px]" />
        </div>
      </Sunken>
    </WindowFrame>
  );
}

/* ---------- Lessons window ---------- */

const LESSON_COLS = ['w-[36px]', 'w-[46px]', 'w-[70px]', 'w-[32px]', 'w-[68px]', 'w-[53px]', 'w-[48px]', 'w-[54px]', 'w-[65px]', 'w-[60px]'];
const LESSONS = [
  { no: '11', gp: '4, 1', expand: false, hh: '2', prof: 'Góm', mat: 'Geo', matClass: 'bg-[#9c9cc9] text-white', grp: '1a,1b,2a, 2b', room: '', roomClass: '' },
  { no: '7', gp: '2, 3', expand: true, hh: '2', prof: 'Ondas', mat: 'Tec', matClass: 'bg-[#0000ff] text-white', grp: '1a', room: 'Tec1', roomClass: 'bg-[#bdbdbd]' },
  { no: '73', gp: '2, 2', expand: true, hh: '3', prof: 'Car', mat: 'DepM', matClass: 'bg-[#8080ff]', grp: '1a,1b', room: 'Dep2', roomClass: 'bg-[#80ffff]' },
  { no: '31', gp: '', expand: false, hh: '5', prof: 'Car', mat: 'Mat', matClass: 'bg-[#b5b300]', grp: '1a', room: '', roomClass: '' },
  { no: '33', gp: '', expand: false, hh: '5', prof: 'Car', mat: 'I', matClass: 'bg-[#ff8080]', grp: '1a', room: '', roomClass: '' },
];

const Plus = () => (
  <svg viewBox="0 0 9 9" className="mr-1 inline size-[9px] align-baseline" aria-hidden="true">
    <path d="M.5.5h8v8h-8z" fill="#fff" stroke="#8e9aa8" />
    <path d="M2 4.500h5M4.500 2v5" stroke="#1f4a8f" />
  </svg>
);

function LessonsWindow() {
  const [lesson, setLesson] = useState('11');
  return (
    <WindowFrame
      title="Grupo 1a (Fernández) / Grupos"
      arrows={<><NavArrow dir="left" /><NavArrow dir="right" /></>}
      toolbar={
        <Tools
          items={['|', 'fit', 'rows', 'newPage', 'remove', '|', 'edit', 'filter', 'sort', 'chain', '|', 'unlink', 'capStar', 'v', '|', 'clock', 'calendar', 'fields', '|', 'tablesGray', 'molecule']}
        />
      }
      footer={
        <footer className="mt-[3px] shrink-0 border-b border-[#85888e] pr-[5px] pl-[7px]">
          <div className="flex h-9 items-start justify-between border-t border-[#9c9ea3] pt-[3px] pl-0.5">
            <div className="flex items-center">
              <MenuButton />
              <label htmlFor="lesson-no" className="ml-2 w-[60px]">N.lec</label>
              <input
                id="lesson-no"
                value={lesson}
                onChange={(e) => setLesson(e.target.value)}
                className="h-[18px] w-[60px] border border-[#6e6e6e] bg-white pl-1 outline-none"
              />
              <Spinner boxed />
            </div>
            <FooterSelect label="Formato" value="Grupos" />
          </div>
        </footer>
      }
    >
      <Sunken className="mx-[7px] min-h-0 flex-1">
        <div className="flex min-h-0 flex-1">
          <div className="min-w-0 flex-1 overflow-hidden">
            <table className="w-px table-fixed border-separate border-spacing-0 font-['Liberation_Sans',sans-serif] text-[11px] leading-3">
              <colgroup>{LESSON_COLS.map((w, i) => <col key={i} className={w} />)}</colgroup>
              <thead>
                <tr className="h-5">
                  <th className={CELL}>N.lec</th>
                  <th className={CELL}><Plus />Gr,Pro</th>
                  {['Horas no pl.', 'HHs', 'HH anuales', 'Profesor', 'Materia', 'Grupo(s)', 'Aula espec', 'Aula'].map((h) => (
                    <th key={h} className={CELL}>{h}</th>
                  ))}
                </tr>
              </thead>
              <tbody>
                {LESSONS.map((l, r) => {
                  const body = r === 0 ? 'bg-[#dbe4e9]' : r % 2 === 0 ? 'bg-white' : '';
                  const lead = r === 0 && 'bg-[#fee3c8]';
                  return (
                    <tr key={l.no} className={r === 0 ? 'h-[38px]' : 'h-[19px]'}>
                      <td className={clsx(CELL, r === 0 && 'bg-[#fed4a4]')}>{l.no}</td>
                      <td className={clsx(CELL, lead)}>
                        {l.expand ? <Plus /> : <span className="mr-1 inline-block w-[9px]" />}
                        {l.gp}
                      </td>
                      <td className={clsx(CELL, lead)} />
                      <td className={clsx(CELL, body, 'text-right')}>{l.hh}</td>
                      <td className={clsx(CELL, body)} />
                      <td className={clsx(CELL, body)}>{l.prof}</td>
                      <td className={clsx(CELL, l.matClass)}>{l.mat}</td>
                      <td className={clsx(CELL, body, 'whitespace-normal!')}>{l.grp}</td>
                      <td className={clsx(CELL, l.roomClass || body)}>{l.room}</td>
                      <td className={clsx(CELL, body)}>Au1a</td>
                    </tr>
                  );
                })}
              </tbody>
            </table>
          </div>
          <VScroll thumb="h-[49px]" />
        </div>
        <HScroll thumb="w-[72%]" />
      </Sunken>
    </WindowFrame>
  );
}

/* ---------- Timetable window ---------- */

type Slot = { text: string; className: string; span?: number; marked?: string };

const I: Slot = { text: 'I', className: 'bg-[#ff8080]' };
const MAT: Slot = { text: 'Mat', className: '', marked: 'bg-[#8080ff]' };
const MAT_RED: Slot = { text: 'Mat', className: '', marked: 'bg-[#ff8080]' };
const GEO: Slot = { text: 'Geo.', className: 'bg-[#8080c0] text-white' };
const MUS: Slot = { text: 'Mus', className: 'bg-white text-[#4a0030]' };
const BIO: Slot = { text: 'Bio', className: 'bg-[#e4ebf3]' };
const DEP: Slot = { text: 'DepM.', className: 'bg-[#8080ff]' };
const A: Slot = { text: 'A', className: 'bg-[#ffff80]' };
const REL: Slot = { text: 'Rel', className: 'bg-[#004040] text-white' };
const DIB: Slot = { text: 'Dib', className: 'bg-[#dbe4e9]', span: 2 };
const TEC: Slot = { text: 'Tec.', className: 'bg-[#0000ff] text-white', span: 2 };
const FREE: Slot = { text: '', className: 'bg-white' };

const DAYS = ['Lu', 'Ma', 'Mi', 'Ju', 'Vi', 'Sa'];
// hours 4 and 8 have one slot fewer, since the double lesson above runs on
const HOURS: Slot[][] = [
  [I, MAT, GEO, MUS, MAT, BIO],
  [MUS, I, DEP, A, REL, I],
  [BIO, DIB, MAT_RED, I, I, MAT],
  [DEP, A, MAT, A, GEO],
  [FREE, REL, FREE, FREE, FREE, FREE],
  [FREE, FREE, FREE, FREE, FREE, FREE],
  [FREE, TEC, FREE, FREE, FREE, FREE],
  [FREE, FREE, FREE, DEP, FREE],
];

function Timetable() {
  return (
    <table className="w-px table-fixed border-collapse text-center text-[12px] leading-4">
      <colgroup>
        <col className="w-[41px]" />
        {DAYS.map((d) => <col key={d} className="w-[41px]" />)}
      </colgroup>
      <thead>
        <tr className="h-[37px]">
          <th className="border border-r-2 border-black p-0 font-normal">Horas<br />2/28</th>
          {DAYS.map((d) => (
            <th key={d} className={clsx('border border-black p-0 text-base font-bold', d === 'Mi' && 'bg-[#fee3c8]')}>{d}</th>
          ))}
        </tr>
      </thead>
      <tbody>
        {HOURS.map((slots, h) => (
          <tr key={h} className="h-[25px]">
            <th className={clsx('border border-r-2 border-black p-0 text-base leading-5 font-bold', h === 2 && 'bg-[#fee3c8]')}>{h + 1}</th>
            {slots.map((s, i) => (
              <td key={i} rowSpan={s.span} className={clsx('border border-black p-0', s.className)}>
                {s.marked ? (
                  <div className={clsx('h-6 border-2 border-dashed border-[#ffff00]', s.marked)}>
                    <div className="flex h-full items-center justify-center bg-[#b5b300]">{s.text}</div>
                  </div>
                ) : (
                  s.text
                )}
              </td>
            ))}
          </tr>
        ))}
      </tbody>
    </table>
  );
}

const DETAIL_COLS = ['w-[40px]', 'w-[98px]', 'w-[36px]', 'w-[38px]', 'w-[96px]', 'w-[43px]'];

function TimetableWindow() {
  return (
    <WindowFrame
      active
      title="1a - Grupo 1a (Fernández)  Horarios  (Gru1)"
      arrows={<><NavArrow dir="left" /><NavArrow dir="right" /></>}
      toolbar={
        <Tools
          items={['people', 'v', 'fit', '|', 'exit', 'lock', 'undoGray', '|', 'palette', 'pin', 'molecule', '|', 'gear', '|']}
          pressed={['palette', 'pin']}
        />
      }
      footer={
        <footer className="flex h-9 shrink-0 items-start justify-end pt-1 pr-[5px]">
          <FooterSelect label="Formato de horario" value="Gru1 - Grupos 1" />
        </footer>
      }
    >
      <div className="mr-[7px] ml-2 flex min-h-0 flex-1 flex-col border-t-2 border-r border-b border-l-2 border-t-[#7c7c7c] border-r-white border-b-white border-l-[#7c7c7c] font-['Liberation_Sans',sans-serif]">
        <div className="flex h-[37px] shrink-0 items-start border-b border-[#9c9ea3]">
          <MenuButton />
          <p className="ml-3 pt-1.5 text-[11px] leading-4 whitespace-nowrap">Curso escolar:17.9.2018 - 29.6.2019</p>
          <button aria-label="Elegir fecha" className="mt-0.5 ml-11 flex h-[26px] w-[35px] shrink-0 items-center gap-1 border border-[#b3a6ae] bg-white pl-px text-[#666]">
            <Icon name="calendar" />
            <Caret className="h-[5px] w-[9px]" />
          </button>
        </div>
        <div className="flex min-h-0 flex-1 items-start gap-[17px] pt-px pl-0.5">
          <Timetable />
          <div className="mt-1 border-t border-l border-black pt-0.5 pl-0.5">
            <div className="flex h-[26px] w-[42px] items-center justify-center border border-black bg-[#ffff80] text-[12px]">A</div>
          </div>
        </div>
        <div className="border-t border-white pt-[3px] pr-0.5 pb-0.5 pl-px">
          <Sunken>
            <div className="overflow-hidden">
              <table className="w-px table-fixed border-separate border-spacing-0 text-[12px] leading-4">
                <colgroup>{DETAIL_COLS.map((w, i) => <col key={i} className={w} />)}</colgroup>
                <thead>
                  <tr className="h-[22px]">
                    {['N.lec', 'Prof./Mat./Aula', 'Gru.', 'Hora', 'Semana lectiva', 'Alum.'].map((h, i) => (
                      <th key={h} className={clsx(CELL, i === 1 && 'bg-[#fee3c8]')}>{h}</th>
                    ))}
                  </tr>
                </thead>
                <tbody>
                  <tr className="h-[21px]">
                    <td className={clsx(CELL, 'bg-[#fee3c8] text-right')}>31</td>
                    <td className={clsx(CELL, 'bg-[#fed4a4]')}>Car, Mat, Au1a</td>
                    <td className={CELL}>1a</td>
                    <td className={CELL} />
                    <td className={CELL}>1-41</td>
                    <td className={clsx(CELL, 'text-right')}>28</td>
                  </tr>
                  <tr className="h-[21px]">
                    <td className={clsx(CELL, 'text-right')}>+3</td>
                    {[1, 2, 3, 4, 5].map((c) => <td key={c} className={clsx(CELL, 'bg-white')} />)}
                  </tr>
                </tbody>
              </table>
              <div className="h-4" />
              <HScroll thumb="w-1/2" />
            </div>
          </Sunken>
        </div>
      </div>
    </WindowFrame>
  );
}

/* ---------- Callouts ---------- */

const Callout = ({ className, children }: { className: string; children: React.ReactNode }) => (
  <div className={clsx("absolute flex items-center justify-center border-5 border-[#be0000] bg-white text-center font-['Liberation_Sans',sans-serif] text-[13px] leading-4 text-[#222]", className)}>
    <p>{children}</p>
  </div>
);

export default function App() {
  return (
    <div className="relative flex h-screen flex-col overflow-hidden border-x-2 border-b-2 border-[#5575ab] bg-[#6583b3] font-['Open_Sans',sans-serif] text-[11px] leading-4 text-black">
      <TitleBar />
      <TabBar />
      <Ribbon />
      <main className="grid min-h-0 flex-1 grid-cols-[525fr_380fr] border-b border-[#c9ced6] bg-[#e4ebf3] pt-0.5 pr-1.5 pb-[3px] pl-[3px]">
        <div className="grid min-h-0 min-w-0 grid-rows-2">
          <GroupsWindow />
          <LessonsWindow />
        </div>
        <TimetableWindow />
      </main>
      <footer className="flex h-[21px] shrink-0 items-center bg-[#e4ebf3] pl-[5px]">
        <span className="flex-1">Pulsando &lt;F1&gt; obtendrá más información.</span>
        <span className="w-[121px]">DE</span>
        <span className="flex gap-1.5 text-[#a9abb0]"><span>UF</span><span>NUM</span><span>RF</span></span>
        <Icon name="grip" className="mt-1 ml-1.5 size-4" />
      </footer>

      <svg viewBox="0 0 12 20" className="pointer-events-none absolute top-[82px] left-7 h-5 w-3" aria-hidden="true">
        <path d="M.7 1v15l3.500-3.500L6.500 18.500l2.500-1L6.800 12h4.500z" fill="#fff" stroke="#000" />
      </svg>
      <Callout className="top-[95px] left-[57px] h-[37px] w-[74px]">clic</Callout>
      <Callout className="top-[365px] left-[304px] h-[55px] w-[189px]">
        Es el conjunto de ventanas<br />correspondientes
      </Callout>
    </div>
  );
}
